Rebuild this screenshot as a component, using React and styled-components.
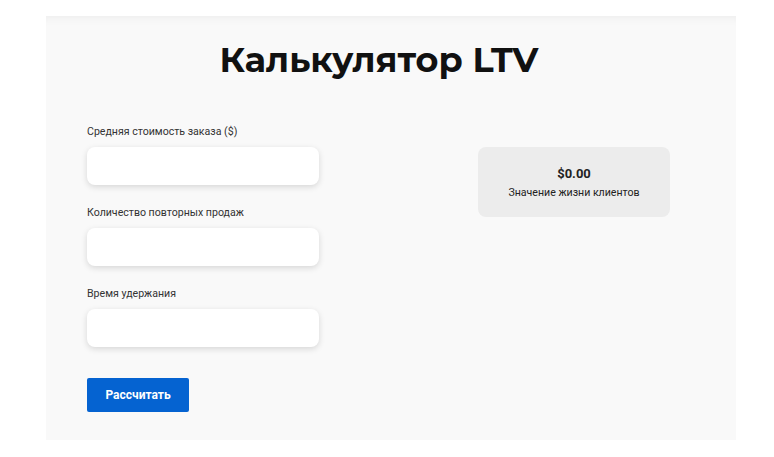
import React, { useState } from 'react'
import styled, { createGlobalStyle } from 'styled-components'

const GlobalStyle = createGlobalStyle`
	html, body {
		margin: 0;
		padding: 0;
		background: #ffffff;
	}
	body {
		font-family: Roboto, "Noto Sans", sans-serif;
		color: #222;
	}
`

const Page = styled.div`
	padding: 16px 38px 17px 46px;
`

const Card = styled.div`
	background: #f9f9f9;
	box-shadow: inset 0 10px 10px -8px rgba(0, 0, 0, 0.05);
	height: 424px;
	box-sizing: border-box;
	padding: 23px 41px 0;
`

const Title = styled.h1`
	font-family: Montserrat, "Noto Sans", sans-serif;
	font-weight: 700;
	font-size: 35px;
	line-height: 42px;
	color: #111;
	text-align: center;
	margin: 0 24px 44px 0;
`

const Body = styled.div`
	display: flex;
	align-items: flex-start;
	gap: 159px;
`

const Form = styled.div`
	display: flex;
	flex-direction: column;
	width: 232px;
`

const Field = styled.div`
	display: flex;
	flex-direction: column;
	margin-bottom: ${props => (props.$last ? '31px' : '21px')};
`

const Label = styled.label`
	font-size: 10.6px;
	line-height: 14px;
	color: #333;
	margin-bottom: 8px;
`

const Input = styled.input`
	height: 38px;
	box-sizing: border-box;
	border: none;
	border-radius: 8px;
	background: #fff;
	box-shadow: 0 2px 6px rgba(0, 0, 0, 0.14);
	padding: 0 12px;
	font-family: Roboto, sans-serif;
	font-size: 13px;
	outline: none;
`

const Button = styled.button`
	align-self: flex-start;
	width: 102px;
	height: 34px;
	border: none;
	border-radius: 2px;
	background: #0563d1;
	color: #fff;
	font-family: Roboto, sans-serif;
	font-weight: 700;
	font-size: 12px;
	cursor: pointer;
`

const Result = styled.div`
	margin-top: 22px;
	width: 192px;
	height: 70px;
	border-radius: 8px;
	background: #ececec;
	display: flex;
	flex-direction: column;
	align-items: center;
	justify-content: center;
	gap: 4px;
`

const Amount = styled.div`
	font-weight: 700;
	font-size: 13px;
	line-height: 16px;
	color: #222;
`

const Caption = styled.div`
	font-size: 10.6px;
	line-height: 13px;
	color: #222;
`

const fields = [
	{ id: 'avg', label: 'Средняя стоимость заказа ($)' },
	{ id: 'repeat', label: 'Количество повторных продаж' },
	{ id: 'retention', label: 'Время удержания' },
]

const App = () => {
	const [values, setValues] = useState({ avg: '', repeat: '', retention: '' })
	const [ltv, setLtv] = useState(0)

	const calc = () => {
		const v = (parseFloat(values.avg) || 0) * (parseFloat(values.repeat) || 0) * (parseFloat(values.retention) || 0)
		setLtv(v)
	}

	return (
		<Page>
			<GlobalStyle />
			<Card>
				<Title>Калькулятор LTV</Title>
				<Body>
					<Form>
						{fields.map(({ id, label }, i) => (
							<Field key={id} $last={i === fields.length - 1}>
								<Label htmlFor={id}>{label}</Label>
								<Input
									id={id}
									type='number'
									value={values[id]}
									onChange={e => setValues({ ...values, [id]: e.target.value })}
								/>
							</Field>
						))}
						<Button onClick={calc}>Рассчитать</Button>
					</Form>
					<Result>
						<Amount>${ltv.toFixed(2)}</Amount>
						<Caption>Значение жизни клиентов</Caption>
					</Result>
				</Body>
			</Card>
		</Page>
	)
}

export default App
